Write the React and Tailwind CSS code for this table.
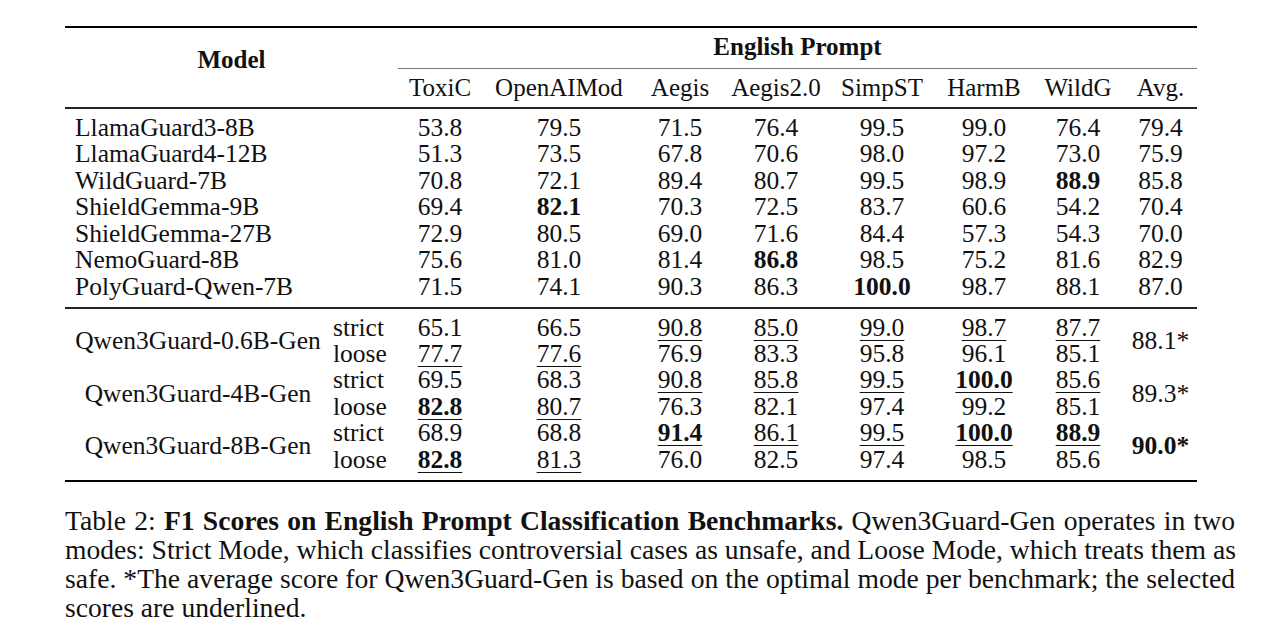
import React from "react";

const COLS =
  "grid grid-cols-[263px_70px_84px_154px_88px_104px_108px_96px_92px_73px]";

const top = [
  ["LlamaGuard3-8B", ["53.8", "79.5", "71.5", "76.4", "99.5", "99.0", "76.4", "79.4"]],
  ["LlamaGuard4-12B", ["51.3", "73.5", "67.8", "70.6", "98.0", "97.2", "73.0", "75.9"]],
  ["WildGuard-7B", ["70.8", "72.1", "89.4", "80.7", "99.5", "98.9", "88.9|b", "85.8"]],
  ["ShieldGemma-9B", ["69.4", "82.1|b", "70.3", "72.5", "83.7", "60.6", "54.2", "70.4"]],
  ["ShieldGemma-27B", ["72.9", "80.5", "69.0", "71.6", "84.4", "57.3", "54.3", "70.0"]],
  ["NemoGuard-8B", ["75.6", "81.0", "81.4", "86.8|b", "98.5", "75.2", "81.6", "82.9"]],
  ["PolyGuard-Qwen-7B", ["71.5", "74.1", "90.3", "86.3", "100.0|b", "98.7", "88.1", "87.0"]],
];

const groups = [
  {
    name: "Qwen3Guard-0.6B-Gen",
    strict: ["65.1", "66.5", "90.8|u", "85.0|u", "99.0|u", "98.7|u", "87.7|u"],
    loose: ["77.7|u", "77.6|u", "76.9", "83.3", "95.8", "96.1", "85.1"],
    avg: "88.1*",
  },
  {
    name: "Qwen3Guard-4B-Gen",
    strict: ["69.5", "68.3", "90.8|u", "85.8|u", "99.5|u", "100.0|bu", "85.6|u"],
    loose: ["82.8|bu", "80.7|u", "76.3", "82.1", "97.4", "99.2", "85.1"],
    avg: "89.3*",
  },
  {
    name: "Qwen3Guard-8B-Gen",
    strict: ["68.9", "68.8", "91.4|bu", "86.1|u", "99.5|u", "100.0|bu", "88.9|bu"],
    loose: ["82.8|bu", "81.3|u", "76.0", "82.5", "97.4", "98.5", "85.6"],
    avg: "90.0*|b",
  },
];

const heads = ["ToxiC", "OpenAIMod", "Aegis", "Aegis2.0", "SimpST", "HarmB", "WildG", "Avg."];

function Num({ s }) {
  const [v, f = ""] = s.split("|");
  const bold = f.includes("b");
  const ul = f.includes("u");
  return (
    <span
      className={
        (bold ? "font-bold " : "") +
        (ul ? "underline decoration-1 underline-offset-[4px]" : "")
      }
    >
      {v}
    </span>
  );
}

export default function App() {
  return (
    <div className="w-[1261px] h-[638px] bg-white text-[#111] font-['Liberation_Serif',serif] overflow-hidden">
      <div className="pt-[26px] pl-[65px]">
        <div className="w-[1132px]">
          {/* top rule */}
          <div className="h-[2px] bg-black" />
          {/* header */}
          <div className={COLS + " text-[25px] leading-[26px]"}>
            <div className="col-span-2 row-span-2 flex justify-center pt-[19px] font-bold">
              Model
            </div>
            <div className="col-span-8 text-center font-bold pt-[6px] pb-[8px] border-b border-[#777]">
              English Prompt
            </div>
            {heads.map((h) => (
              <div key={h} className="text-center pt-[6px] pb-[6px]">
                {h}
              </div>
            ))}
          </div>
          <div className="h-[1.5px] bg-[#222]" />
          {/* section 1 */}
          <div className={COLS + " text-[25.5px] leading-[26.5px] pt-[6px] pb-[7px]"}>
            {top.map(([name, vals]) => (
              <React.Fragment key={name}>
                <div className="col-span-2 pl-[10px] whitespace-nowrap">{name}</div>
                {vals.map((v, i) => (
                  <div key={i} className="text-center">
                    <Num s={v} />
                  </div>
                ))}
              </React.Fragment>
            ))}
          </div>
          <div className="h-[1.5px] bg-[#222]" />
          {/* section 2 */}
          <div className="pt-[6px] pb-[7px]">
            {groups.map((g) => (
              <div key={g.name} className={COLS + " text-[25.5px] leading-[26.4px]"}>
                <div className="row-span-2 flex items-center justify-center whitespace-nowrap pl-[3px]">
                  {g.name}
                </div>
                <div className="pl-[5px]">strict</div>
                {g.strict.map((v, i) => (
                  <div key={i} className="text-center">
                    <Num s={v} />
                  </div>
                ))}
                <div className="row-span-2 flex items-center justify-center">
                  <Num s={g.avg} />
                </div>
                <div className="pl-[5px]">loose</div>
                {g.loose.map((v, i) => (
                  <div key={i} className="text-center">
                    <Num s={v} />
                  </div>
                ))}
              </div>
            ))}
          </div>
          <div className="h-[2px] bg-black" />
        </div>
      </div>
      {/* caption */}
      <div className="ml-[65px] w-[1170px] mt-[24px] text-[27.6px] leading-[29px]">
        <div className="text-justify [text-align-last:justify] whitespace-nowrap">
          Table 2: <span className="font-bold">F1 Scores on English Prompt Classification Benchmarks.</span>{" "}
          Qwen3Guard-Gen operates in two
        </div>
        <div className="text-justify [text-align-last:justify] whitespace-nowrap">
          modes: Strict Mode, which classifies controversial cases as unsafe, and Loose Mode, which treats them as
        </div>
        <div className="text-justify [text-align-last:justify] whitespace-nowrap">
          safe. *The average score for Qwen3Guard-Gen is based on the optimal mode per benchmark; the selected
        </div>
        <div>scores are underlined.</div>
      </div>
    </div>
  );
}
